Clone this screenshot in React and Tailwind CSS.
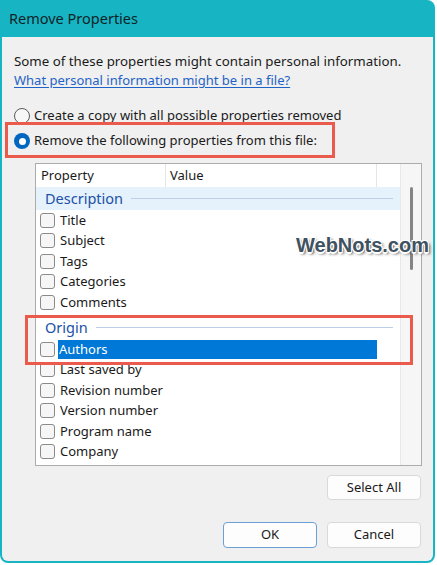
import React from "react";

function Check() {
  return <span className="w-[15px] h-[15px] shrink-0 rounded-[3px] border border-[#8a8a8a] bg-[#f6f6f6] ml-[4px]" />;
}

function Item({ label, selected }) {
  return (
    <div className="h-[20.5px] flex items-center shrink-0">
      <Check />
      {selected ? (
        <span className="ml-[3px] w-[319px] h-[19.5px] bg-[#0078d7] text-white pl-[1px] flex items-center leading-none">{label}</span>
      ) : label ? (
        <span className="ml-[5px] leading-none">{label}</span>
      ) : null}
    </div>
  );
}

function Group({ label, highlight, tall }) {
  return (
    <div className={`${tall ? "h-[26.5px] pt-[3px]" : "h-[23px]"} shrink-0 flex items-center pl-[9px] pr-[7px] ${highlight ? "bg-[#e5f1fb]" : ""}`}>
      <span className="text-[14.5px] text-[#2050a8] leading-none">{label}</span>
      <span className="flex-1 h-px bg-[#bccfe6] ml-[8px]" />
    </div>
  );
}

export default function App() {
  return (
    <div className="w-[437px] h-[565px] bg-white overflow-hidden relative font-['Noto_Sans','Open_Sans',sans-serif] text-[13px] text-[#1a1a1a]">
      <div className="w-[435px] h-[563px] bg-[#17b4c4] rounded-tr-[8px] rounded-b-[8px] pl-[2px] pr-[2px] pb-[2px] flex flex-col">
        <div className="h-[37px] shrink-0 flex items-center pl-[7px] text-[14.5px] text-[#102327]">Remove Properties</div>
        <div className="flex-1 bg-[#f0f0f0] rounded-b-[6px] flex flex-col pl-[12px] pr-[12px]">
          <div className="mt-[15.5px] h-[19px] flex items-center text-[13.3px]">Some of these properties might contain personal information.</div>
          <div className="h-[19px] flex items-center text-[#1f63c6] underline underline-offset-2 decoration-[#1f63c6]">What personal information might be in a file?</div>
          <div className="mt-[13px] h-[25px] flex items-center">
            <span className="w-[16px] h-[16px] rounded-full border border-[#5a5a5a] bg-[#f7f7f7] shrink-0" />
            <span className="ml-[4px]">Create a copy with all possible properties removed</span>
          </div>
          <div className="h-[25px] flex items-center">
            <span className="w-[16px] h-[16px] rounded-full bg-[#0067c0] shrink-0 flex items-center justify-center">
              <span className="w-[7px] h-[7px] rounded-full bg-white" />
            </span>
            <span className="ml-[4px]">Remove the following properties from this file:</span>
          </div>
          <div className="mt-[9.5px] ml-[21px] w-[387px] h-[303px] border border-[#acacac] bg-white flex overflow-hidden">
            <div className="w-[364px] flex flex-col overflow-hidden">
              <div className="h-[23px] shrink-0 flex items-center">
                <div className="w-[130px] h-full flex items-center pl-[5px] border-r border-[#e5e5e5]">Property</div>
                <div className="w-[211px] h-full flex items-center pl-[4px] border-r border-[#e5e5e5]">Value</div>
              </div>
              <Group label="Description" highlight />
              <Item label="Title" />
              <Item label="Subject" />
              <Item label="Tags" />
              <Item label="Categories" />
              <Item label="Comments" />
              <Group label="Origin" tall />
              <Item label="Authors" selected />
              <Item label="Last saved by" />
              <Item label="Revision number" />
              <Item label="Version number" />
              <Item label="Program name" />
              <Item label="Company" />
              <Item label="" />
            </div>
            <div className="flex-1 bg-[#f6f6f6] border-l border-[#e8e8e8] flex justify-center pt-[23px]">
              <span className="w-[3px] h-[83px] rounded-full bg-[#858585]" />
            </div>
          </div>
          <div className="mt-[9px] flex justify-end">
            <button className="w-[94px] h-[25px] bg-[#fdfdfd] border border-[#d9d9d9] rounded-[4px] text-[13px]">Select All</button>
          </div>
          <div className="mt-[22px] flex justify-end gap-[10px]">
            <button className="w-[94px] h-[26px] bg-[#fdfdfd] border border-[#6c9fd6] rounded-[4px] text-[13px]">OK</button>
            <button className="w-[94px] h-[26px] bg-[#fdfdfd] border border-[#d9d9d9] rounded-[4px] text-[13px]">Cancel</button>
          </div>
        </div>
      </div>
      <div className="absolute left-[5px] top-[122px] w-[330px] h-[36px] border-[3px] border-[#ea5a4d]" />
      <div className="absolute left-[25px] top-[315px] w-[388px] h-[50px] border-[3px] border-[#ea5a4d]" />
      <div className="absolute left-[296px] top-[230px] text-[20px] font-bold text-[#3e5261] font-['Liberation_Sans',sans-serif] [text-shadow:-1px_-1px_0_#fff,1px_-1px_0_#fff,-1px_1px_0_#fff,1px_1px_0_#fff,0_-1.5px_0_#fff,0_1.5px_0_#fff,2px_2px_3px_#444]">WebNots.com</div>
    </div>
  );
}
